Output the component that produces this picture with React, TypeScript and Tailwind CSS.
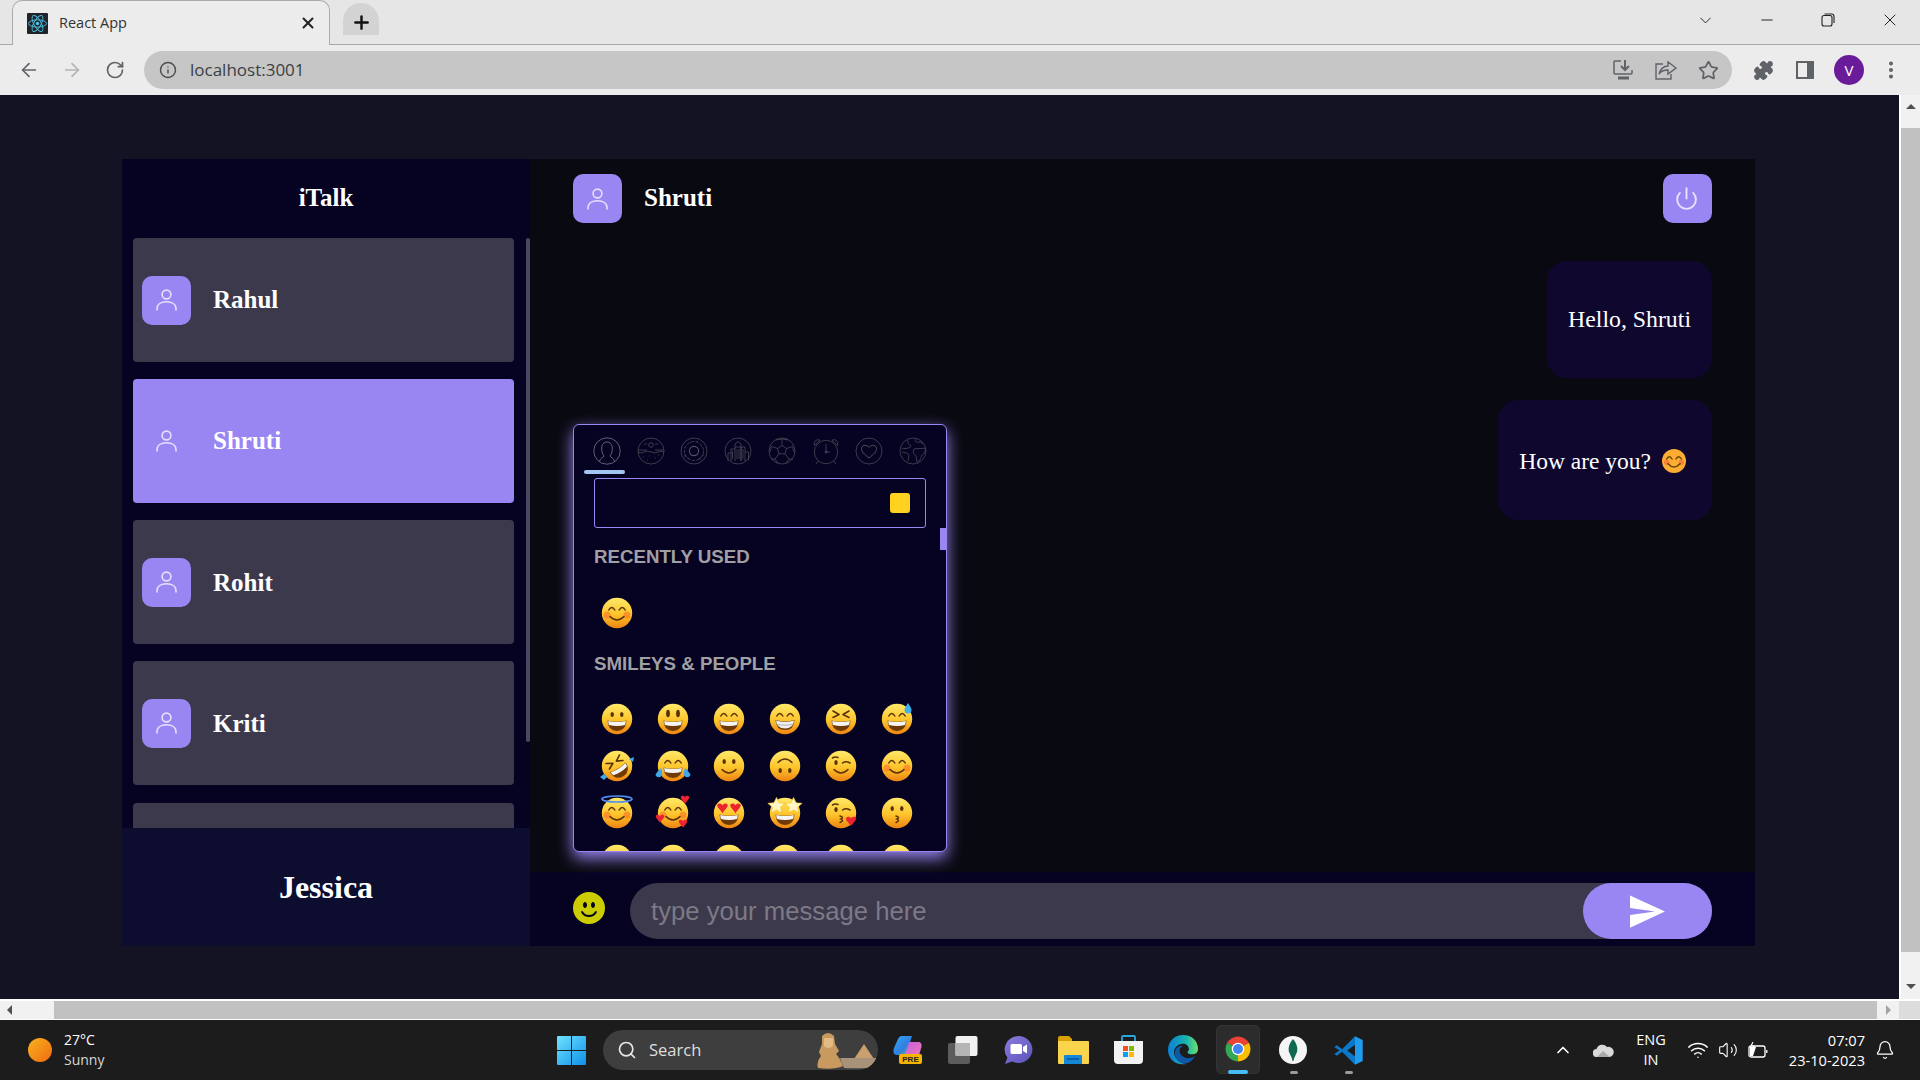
import React from "react";
import { ArrowLeft, ArrowRight, RotateCw, Info, X, Plus, ChevronDown, Minus, Star, Puzzle, EllipsisVertical, Power, ChevronUp, Wifi, Volume2, Bell, Search } from "lucide-react";
import { BsEmojiSmileFill } from "react-icons/bs";
import { IoMdSend } from "react-icons/io";

const Eyes = ({ kind }: { kind: string }) => {
  const c = "#5b3206";
  if (kind === "oval") return <g fill={c}><ellipse cx="11.2" cy="11.5" rx="1.7" ry="2.6" /><ellipse cx="20.8" cy="11.5" rx="1.7" ry="2.6" /></g>;
  if (kind === "big") return <g fill={c}><ellipse cx="11" cy="10.5" rx="1.9" ry="3.8" /><ellipse cx="21" cy="10.5" rx="1.9" ry="3.8" /></g>;
  if (kind === "arc") return <g fill="none" stroke={c} strokeWidth="1.5" strokeLinecap="round"><path d="M7.8 13 Q10.8 7.8 13.8 13" /><path d="M18.2 13 Q21.2 7.8 24.2 13" /></g>;
  if (kind === "x") return <g fill="none" stroke={c} strokeWidth="1.6" strokeLinecap="round" strokeLinejoin="round"><path d="M8 8 L14 11.5 L8 14.5" /><path d="M24 8 L18 11.5 L24 14.5" /></g>;
  if (kind === "wink") return <g fill="none" stroke={c} strokeWidth="1.5" strokeLinecap="round"><ellipse cx="11" cy="12.5" rx="1.7" ry="2.5" fill={c} stroke="none" /><path d="M17.5 13 Q21 10.5 25 13" /><path d="M7.5 8 Q10 6.5 13 7.5" /></g>;
  return null;
};
const Mouth = ({ kind }: { kind: string }) => {
  if (kind === "grin") return <g><path d="M6.5 17.5 Q16 20 25.5 17.5 Q25 28 16 28 Q7 28 6.5 17.5Z" fill="#6e3b08" /><path d="M7.2 18 Q16 20.2 24.8 18 Q24.6 21 24 22 Q16 24 8 22 Q7.4 21 7.2 18Z" fill="#f4f4f4" /></g>;
  if (kind === "teeth") return <g><path d="M6.5 17 Q16 19.5 25.5 17 Q25 27 16 27 Q7 27 6.5 17Z" fill="#6e3b08" /><path d="M7 17.6 Q16 20 25 17.6 Q24.6 25.5 16 25.5 Q7.4 25.5 7 17.6Z" fill="#eee" /><path d="M7.4 21.4 Q16 23.2 24.6 21.4" stroke="#999" strokeWidth=".7" fill="none" /></g>;
  if (kind === "smile") return <path d="M9 19.5 Q16 26.5 23 19.5" fill="none" stroke="#5b3206" strokeWidth="1.5" strokeLinecap="round" />;
  if (kind === "kiss") return <path d="M15 19 Q19.5 20.5 16 22 Q19.5 23.5 15 25.5" fill="none" stroke="#5b3206" strokeWidth="1.5" strokeLinecap="round" />;
  return null;
};
const Heart = ({ x, y, s = 1 }: { x: number; y: number; s?: number }) => (
  <path transform={`translate(${x} ${y}) scale(${s})`} d="M0 3 C-3 -1 -5 -2.5 -5 -4.2 C-5 -6.5 -1.6 -7 0 -4.6 C1.6 -7 5 -6.5 5 -4.2 C5 -2.5 3 -1 0 3Z" fill="#ee2330" />
);
const Star5 = ({ x, y }: { x: number; y: number }) => (
  <path transform={`translate(${x} ${y}) scale(1.35)`} d="M0 -6 L1.9 -2 L6.4 -1.6 L3 1.3 L4 5.6 L0 3.3 L-4 5.6 L-3 1.3 L-6.4 -1.6 L-1.9 -2Z" fill="#fff6c4" stroke="#f2c01a" strokeWidth=".5" />
);

const FACES = [
  ["oval", "grin"], ["big", "grin"], ["arc", "grin"], ["arc", "teeth"], ["x", "grin"], ["arc", "grin", "sweat"],
  ["x", "grin", "rofl"], ["arc", "grin", "joy"], ["oval", "smile"], ["oval", "smile", "upside"], ["wink", "smile"], ["arc", "smile", "blush"],
  ["arc", "smile", "halo"], ["arc", "smile", "hearts"], ["none", "grin", "hearteyes"], ["none", "grin", "stars"], ["wink", "kiss", "kissheart"], ["oval", "kiss"],
  ["oval", "grin"], ["oval", "grin"], ["oval", "grin"], ["oval", "grin"], ["oval", "grin"], ["oval", "grin"],
];

function Emoji({ id, face }: { id: string; face: string[] }) {
  const [eyes, mouth, extra] = face;
  const rot = extra === "rofl" ? "rotate(-32 16 16)" : extra === "upside" ? "rotate(180 16 16)" : undefined;
  return (
    <svg width="38" height="38" viewBox="-1 -1 38 38">
      <defs>
        <linearGradient id={id} x1="0" y1="0" x2="0" y2="1">
          <stop offset="0" stopColor="#ffe968" />
          <stop offset=".55" stopColor="#fdc42c" />
          <stop offset="1" stopColor="#ee8412" />
        </linearGradient>
      </defs>
      <g transform="translate(2 2)">
        <circle cx="16" cy="16" r="15.2" fill={`url(#${id})`} />
        {(extra === "blush" || extra === "halo" || extra === "hearts") && <g fill="#fb6a2b" opacity=".55"><circle cx="6" cy="18" r="3.5" /><circle cx="26" cy="18" r="3.5" /></g>}
        <g transform={rot}>
          <Eyes kind={eyes} />
          <Mouth kind={mouth} />
        </g>
        {extra === "sweat" && <path d="M27 0 C29 3.5 30.5 5 30.5 7 A3.5 3.5 0 0 1 23.5 7 C23.5 5 25 3.5 27 0Z" fill="#3db2ee" />}
        {extra === "joy" && <g fill="#3fa9ee"><path d="M4 18 C0 22 -1.5 24 -1.5 25 A3.5 3.5 0 0 0 5 25 C5.5 23 5 20 4 18Z" /><path d="M28 18 C32 22 33.5 24 33.5 25 A3.5 3.5 0 0 1 27 25 C26.5 23 27 20 28 18Z" /></g>}
        {extra === "rofl" && <g fill="#3fa9ee"><path d="M28 9 L33 7 L32 12 Z" /><path d="M3 24 L-1 27 L3 30 L6 27Z" /></g>}
        {extra === "halo" && <ellipse cx="16" cy="2" rx="15" ry="3" fill="none" stroke="#4f8df2" strokeWidth="1.7" />}
        {extra === "hearts" && <g><Heart x={28} y={4} s={.85} /><Heart x={3} y={23} s={.85} /><Heart x={26} y={28} s={.85} /></g>}
        {extra === "hearteyes" && <g><Heart x={9.5} y={13} s={1.05} /><Heart x={22.5} y={13} s={1.05} /></g>}
        {extra === "stars" && <g><Star5 x={7.5} y={8.5} /><Star5 x={24.5} y={8.5} /></g>}
        {extra === "kissheart" && <Heart x={26} y={26} s={1} />}
      </g>
    </svg>
  );
}

const tabStroke = { fill: "none", stroke: "currentColor", strokeWidth: 0.7 };
const CatIcons = [
  <g {...tabStroke}><circle cx="14" cy="14" r="13.2" /><path d="M6.5 24.5 C7 21 10.5 20.5 11 19 C9.5 17 8.5 14.5 8.7 11 C9 7 11 5 14 5 C17 5 19 7 19.3 11 C19.5 14.5 18.5 17 17 19 C17.5 20.5 21 21 21.5 24.5" /></g>,
  <g {...tabStroke}><circle cx="14" cy="14" r="13" /><circle cx="14" cy="8" r="2.3" /><path d="M1.5 13 H10 M18 13 H26.5 M7 7 H10 M18 7 H21 M1 15 Q4 17 7 15 T14 15 T21 15 T27 15" /><path d="M6 20 h1 M12 19 h1 M18 21 h1 M10 23 h1 M21 18 h1" /></g>,
  <g {...tabStroke}><circle cx="14" cy="14" r="13" /><circle cx="14" cy="14" r="4.6" strokeWidth="1.1" /><circle cx="14" cy="14" r="9.5" strokeDasharray="3 1.6" /><path d="M5 17 v3 M8 20 v2 M20 20 v3 M23 17 v2 M10 6 h1 M17 5 h1 M21 9 h1" /></g>,
  <g {...tabStroke}><circle cx="14" cy="14" r="13" /><path d="M11 24 V7 L14 4.5 L17 7 V24 M11 10 H17 M13 12 V22 M15 12 V22 M7 24 V12 H11 M17 24 V10 H21 V24 M4 24 V16 H7 M21 15 H24.5 V23 M8.5 14 V22 M19 12 V22" /></g>,
  <g {...tabStroke}><circle cx="14" cy="14" r="13" /><path d="M9.5 11.5 L14 8.5 L18.5 11.5 L17 16.8 H11 Z M14 8.5 V2 M9.5 11.5 L3.5 9.5 M18.5 11.5 L24.5 9.5 M11 16.8 L7 22 M17 16.8 L21 22 M7 22 L10 26 M21 22 L18 26 M3.5 9.5 L2 15 M24.5 9.5 L26 15 M7 22 H3 M21 22 H25 M14 2 L8 3 M14 2 L20 3" /></g>,
  <g {...tabStroke}><circle cx="14" cy="15" r="11.7" /><path d="M14 7 V15 H18" /><circle cx="14" cy="15" r="1" /><path d="M2.5 8.5 A4 4 0 0 1 8 3.2 Z M25.5 8.5 A4 4 0 0 0 20 3.2 Z M6 24 L4 27 M22 24 L24 27" /></g>,
  <g {...tabStroke}><circle cx="14" cy="14" r="13" /><path strokeWidth="1" d="M14 21 C9 17 6.5 14.5 6.5 11.5 C6.5 8 11.5 7 14 10.5 C16.5 7 21.5 8 21.5 11.5 C21.5 14.5 19 17 14 21Z" /></g>,
  <g {...tabStroke}><circle cx="14" cy="14" r="13" /><path d="M8 3 C10 5 8 7 11 8 C13 9 11 11 9 11 C7 12 5 11 3 12 M17 2 C15 4 17 6 20 5 C22 5 23 6 24 7 M15 12 C18 11 22 12 26 11 C27 14 25 17 23 18 C22 21 20 25 18 25 C17 22 18 19 16 18 C14 17 14 14 15 12Z M3 15 C5 16 7 15 9 17 C11 19 9 21 9 24" /></g>,
];

const ReactLogo = () => (
  <svg width="21" height="21" viewBox="0 0 21 21"><rect width="21" height="21" rx="1" fill="#20232a" /><g fill="none" stroke="#4fbfdf" strokeWidth=".9"><ellipse cx="10.5" cy="10.5" rx="9" ry="3.6" /><ellipse cx="10.5" cy="10.5" rx="9" ry="3.6" transform="rotate(60 10.5 10.5)" /><ellipse cx="10.5" cy="10.5" rx="9" ry="3.6" transform="rotate(120 10.5 10.5)" /></g><circle cx="10.5" cy="10.5" r="1.8" fill="#4fbfdf" /></svg>
);

const Copilot = () => (
  <svg width="30" height="30" viewBox="0 0 30 30">
    <defs>
      <linearGradient id="cpA" x1="0" y1="0" x2="1" y2="1"><stop offset="0" stopColor="#38a6f2" /><stop offset=".6" stopColor="#2f7fe0" /><stop offset="1" stopColor="#6bd26e" /></linearGradient>
      <linearGradient id="cpB" x1="0" y1="0" x2="1" y2="1"><stop offset="0" stopColor="#c35fe0" /><stop offset="1" stopColor="#f27ab0" /></linearGradient>
    </defs>
    <path d="M9 1 H19 L13 20 H4 C0 20 0 16 1 13 L5 4 C6 2 7 1 9 1Z" fill="url(#cpA)" />
    <path d="M16 7 H25 C28 7 29 9 28.5 12 L26 20 C25 22 24 23 22 23 H11 Z" fill="url(#cpB)" />
    <rect x="6" y="19" width="23" height="10" rx="2" fill="#f4b400" />
    <text x="17.5" y="27" fontSize="8" fontWeight="700" fontFamily="Liberation Sans" fill="#222" textAnchor="middle">PRE</text>
  </svg>
);
const TaskView = () => (
  <svg width="32" height="30" viewBox="0 0 32 30">
    <rect x="1" y="8" width="22" height="21" rx="2" fill="#5c5c5c" />
    <rect x="8.5" y="1" width="22" height="20" rx="2" fill="#f1f1f1" />
    <rect x="8.5" y="8" width="14.5" height="13" fill="#b5b5b5" />
  </svg>
);
const Meet = () => (
  <svg width="30" height="30" viewBox="0 0 30 30">
    <defs><linearGradient id="mt" x1="0" y1="0" x2="1" y2="1"><stop offset="0" stopColor="#8a7bde" /><stop offset="1" stopColor="#5a52b8" /></linearGradient></defs>
    <path d="M15 1 A14 13.5 0 1 1 9 26.5 L2 29 L4.5 22.5 A14 13.5 0 0 1 15 1Z" fill="url(#mt)" />
    <rect x="7.5" y="9" width="11.5" height="10" rx="1.5" fill="#fff" />
    <path d="M20 12 L24 9.5 V18.5 L20 16Z" fill="#fff" />
  </svg>
);
const Explorer = () => (
  <svg width="31" height="28" viewBox="0 0 31 28">
    <path d="M0 2 Q0 0 2 0 H11 L14 3 V8 H0Z" fill="#d9a106" />
    <path d="M0 5 H30 Q31 5 31 6 V27 Q31 28 30 28 H1 Q0 28 0 27Z" fill="#fbd44e" />
    <path d="M6 20 Q6 19 7 19 H23 Q24 19 24 20 V28 H6Z" fill="#1686d6" />
    <rect x="9" y="22" width="12" height="2" fill="#0b5fa8" />
  </svg>
);
const Store = () => (
  <svg width="29" height="30" viewBox="0 0 29 30">
    <path d="M8 6 V2 Q8 1 9 1 H20 Q21 1 21 2 V6" fill="none" stroke="#2aa6e0" strokeWidth="1.8" />
    <path d="M0 6 H29 V25 Q29 29 25 29 H4 Q0 29 0 25Z" fill="#f2f2f2" />
    <rect x="9" y="11" width="5" height="5" fill="#f25022" /><rect x="15" y="11" width="5" height="5" fill="#7fba00" />
    <rect x="9" y="17" width="5" height="5" fill="#00a4ef" /><rect x="15" y="17" width="5" height="5" fill="#ffb900" />
  </svg>
);
const Edge = () => (
  <svg width="30" height="30" viewBox="0 0 30 30">
    <defs><linearGradient id="ed" x1="0" y1="0" x2="1" y2="0"><stop offset="0" stopColor="#0b7fd6" /><stop offset=".6" stopColor="#18b3b0" /><stop offset="1" stopColor="#6fe06c" /></linearGradient></defs>
    <path d="M15 0 C24 0 30 6 30 14 C30 19 25 20 21 19 C19 18 19 16 21 15 C21 11 18 8 13 9 C9 10 6 13 6 17 C6 24 13 29 18 29 C8 31 0 24 0 15 C0 6 7 0 15 0Z" fill="url(#ed)" />
    <path d="M7 16 C8 12 12 10 15 11 C12 12 11 15 12 18 C14 23 21 25 27 21 C24 27 18 30 13 28 C9 26 6 21 7 16Z" fill="#0d59a8" />
  </svg>
);
const Chrome = () => (
  <svg width="30" height="30" viewBox="0 0 48 48">
    <path d="M24 24 L6.7 14 A20 20 0 0 1 41.3 14Z" fill="#ea4335" />
    <path d="M24 24 L41.3 14 A20 20 0 0 1 24 44Z" fill="#fbbc04" />
    <path d="M24 24 L24 44 A20 20 0 0 1 6.7 14Z" fill="#34a853" />
    <circle cx="24" cy="24" r="10" fill="#fff" /><circle cx="24" cy="24" r="8" fill="#4285f4" />
  </svg>
);
const Compass = () => (
  <svg width="30" height="30" viewBox="0 0 30 30">
    <circle cx="15" cy="15" r="14" fill="#f5f5f5" />
    <path d="M15 4 C19 9 20 13 19 17 C18 20 16 22 15.5 26 H14.5 C14 22 12 20 11 17 C10 13 11 9 15 4Z" fill="#0f6a4f" />
  </svg>
);
const VSCode = () => (
  <svg width="31" height="31" viewBox="0 0 24 24">
    <path fillRule="evenodd" d="M17 1 L7 11 L3 8 L1 9.2 V14.8 L3 16 L7 13 L17 23 Z M17 7.5 L11 12 L17 16.5Z M1 9.2 L5 12 L1 14.8Z" fill="#0b78c9" />
    <path d="M17 1 L23 3.8 V20.2 L17 23Z" fill="#1f9cf0" />
  </svg>
);
const Sphinx = () => (
  <svg width="64" height="38" viewBox="0 0 64 38">
    <path d="M40 27 L50 12 L60 27Z" fill="#c9a06d" />
    <path d="M26 26 H62 V35 Q50 37 30 36Z" fill="#a8937a" />
    <path d="M8 4 Q14 -2 20 4 L21 12 L25 19 L22 22 Q26 26 29 34 Q20 38 4 36 Q2 30 7 24 L5 20 L8 12Z" fill="#c89a60" />
    <path d="M10 6 H19 V14 Q14 18 10 14Z" fill="#e2bb85" />
  </svg>
);

const taskIcons = [<Copilot />, <TaskView />, <Meet />, <Explorer />, <Store />, <Edge />];

function Avatar({ plain }: { plain?: boolean }) {
  return (
    <div className={`w-[49px] h-[49px] rounded-[10px] flex items-center justify-center shrink-0 ${plain ? "" : "bg-[#9a86f3]"}`}>
      <svg width="21" height="22" viewBox="0 0 21 22" fill="none" stroke="#e6e0fd" strokeWidth="1.6" strokeLinecap="round">
        <circle cx="10.5" cy="5.5" r="4.4" />
        <path d="M1 21 V20 C1 15.5 5 12.8 10.5 12.8 C16 12.8 20 15.5 20 20 V21" />
      </svg>
    </div>
  );
}

function Contact({ name, active }: { name: string; active?: boolean }) {
  return (
    <div className={`h-[124px] shrink-0 rounded-[4px] flex items-center gap-[22px] pl-[9px] ${active ? "bg-[#9a86f3]" : "bg-[#3c394c]"}`}>
      <Avatar plain={active} />
      <span className="text-[25px] font-bold text-white">{name}</span>
    </div>
  );
}

export default function App() {
  return (
    <div className="w-[1920px] h-[1080px] overflow-hidden flex flex-col bg-[#131324] font-['Liberation_Serif',serif]">
      {/* tab strip */}
      <div className="h-[45px] shrink-0 bg-[#e6e6e6] border-b border-[#a8a8a8] flex items-start pl-[12px] font-['Open_Sans',sans-serif]">
        <div className="w-[318px] h-[45px] rounded-t-[10px] border border-b-0 border-[#ababab] bg-[#ececec] flex items-center pl-[14px] pr-[12px] gap-[11px]">
          <ReactLogo />
          <span className="text-[14.5px] text-[#333]">React App</span>
          <X size={18} strokeWidth={2.6} className="ml-auto text-[#222]" />
        </div>
        <div className="ml-[13px] mt-[3px] w-[36px] h-[32px] rounded-t-[18px] bg-[#d3d3d3] flex items-start justify-center pt-[9px]">
          <Plus size={21} strokeWidth={2.8} className="text-[#111]" />
        </div>
        <div className="ml-auto flex items-center h-[40px] text-[#222]">
          <ChevronDown size={19} strokeWidth={1.2} />
          <div className="w-[60px] ml-[22px] flex justify-center"><Minus size={18} strokeWidth={1.3} /></div>
          <div className="w-[62px] flex justify-center">
            <svg width="14" height="14" viewBox="0 0 14 14" fill="none" stroke="#222" strokeWidth="1.1"><rect x="1" y="2.5" width="10" height="10.5" rx="2" /><path d="M3.5 1 H10.5 Q13 1 13 3.5 V10" /></svg>
          </div>
          <div className="w-[61px] flex justify-center"><X size={20} strokeWidth={1.2} /></div>
        </div>
      </div>
      {/* toolbar */}
      <div className="h-[50px] shrink-0 bg-[#ececec] flex items-center font-['Open_Sans',sans-serif]">
        <div className="w-[144px] flex items-center pl-[18px] gap-[21px] text-[#5f6368]">
          <ArrowLeft size={22} strokeWidth={1.8} />
          <ArrowRight size={22} strokeWidth={1.8} className="text-[#b3b3b3]" />
          <RotateCw size={20} strokeWidth={2} className="ml-[1px]" />
        </div>
        <div className="w-[1588px] h-[38px] rounded-full bg-[#c6c6c6] flex items-center pl-[15px] pr-[13px] text-[#4c4c4c]">
          <Info size={18} strokeWidth={1.9} />
          <span className="ml-[13px] text-[17px] text-[#3c4043]">localhost:3001</span>
          <svg className="ml-auto" width="22" height="22" viewBox="0 0 22 22" fill="none" stroke="#5f6368" strokeWidth="1.5"><path d="M9 2 H3 Q2 2 2 3 V14 Q2 15 3 15 H19 Q20 15 20 14 V11" /><path d="M13 1 V10 M9 7 L13 11 L17 7" strokeWidth="2" /><path d="M6 19 H17" strokeWidth="3" /></svg>
          <svg className="ml-[21px]" width="22" height="20" viewBox="0 0 22 20" fill="none" stroke="#5f6368" strokeWidth="1.4"><path d="M8 4 H1 V19 H16 V14" /><path d="M4 14 C5 9 9 6 13 6 V2 L21 8 L13 14 V10 C9 10 6 11 4 14Z" /></svg>
          <Star size={21} strokeWidth={2} className="ml-[21px] text-[#5f6368]" />
        </div>
        <div className="flex items-center text-[#5f6368]">
          <Puzzle size={21} fill="#5f6368" strokeWidth={1.5} className="ml-[21px]" />
          <svg className="ml-[21px]" width="20" height="20" viewBox="0 0 20 20"><path d="M1 1 H19 V19 H1Z M3 3 V17 H12 V3Z" fill="#5f6368" fillRule="evenodd" /></svg>
          <div className="ml-[19px] w-[30px] h-[30px] rounded-full bg-[#6a1b9a] text-white text-[15px] flex items-center justify-center">V</div>
          <EllipsisVertical size={22} strokeWidth={2.4} className="ml-[16px]" />
        </div>
      </div>
      {/* middle */}
      <div className="h-[904px] shrink-0 flex">
        <div className="w-[1899px] shrink-0 pl-[122px] pt-[64px]">
          <div className="w-[1633px] h-[787px] flex">
            {/* sidebar */}
            <div className="w-[408px] shrink-0 flex flex-col bg-[#060222] overflow-hidden">
              <div className="h-[79px] shrink-0 flex items-center justify-center text-white font-bold text-[25px] pb-[2px]">iTalk</div>
              <div className="relative h-[590px] shrink-0 overflow-hidden flex flex-col gap-[17.15px] pl-[11px] pr-[16px]">
                <Contact name="Rahul" />
                <Contact name="Shruti" active />
                <Contact name="Rohit" />
                <Contact name="Kriti" />
                <Contact name="" />
                <div className="absolute right-0 top-0 w-[4px] h-[504px] rounded-full bg-[#4a4760]" />
              </div>
              <div className="h-[118px] shrink-0 bg-[#0d0d30] flex items-center justify-center text-white font-bold text-[32px]">Jessica</div>
            </div>
            {/* chat */}
            <div className="relative flex-1 flex flex-col bg-[#090911]">
              <div className="h-[102px] shrink-0 flex items-start justify-between pt-[15px] px-[43px]">
                <div className="flex items-center gap-[22px]">
                  <Avatar />
                  <span className="text-white font-bold text-[25px] pb-[2px]">Shruti</span>
                </div>
                <div className="w-[49px] h-[49px] rounded-[10px] bg-[#9a86f3] flex items-center justify-center">
                  <Power size={25} strokeWidth={1.8} className="text-[#e9e4fd] -translate-x-[1px]" />
                </div>
              </div>
              <div className="flex-1 flex flex-col items-end gap-[22px] pr-[43px]">
                <div className="h-[117px] rounded-[20px] bg-[#10072f] text-white text-[23.8px] px-[21px] flex items-center">Hello, Shruti</div>
                <div className="h-[120px] rounded-[20px] bg-[#10072f] text-white text-[23.5px] pl-[21px] pr-[26px] flex items-center">
                  <span className="pt-[4px]">How are you?</span>
                  <svg className="ml-[11px] pt-[1px]" width="24" height="25" viewBox="0 0 36 36">
                    <circle cx="18" cy="18" r="18" fill="#ffac33" />
                    <circle cx="7" cy="20" r="4" fill="#f4743b" opacity=".8" /><circle cx="29" cy="20" r="4" fill="#f4743b" opacity=".8" />
                    <g fill="none" stroke="#664500" strokeWidth="2.2" strokeLinecap="round"><path d="M7 15 Q11 8 15 15" /><path d="M21 15 Q25 8 29 15" /><path d="M9 22 Q18 32 27 22" /></g>
                  </svg>
                </div>
              </div>
              <div className="h-[74px] shrink-0 bg-[#060222] flex items-center pl-[43px] pr-[43px] gap-[25px]">
                <BsEmojiSmileFill size={32} className="text-[#cccc02] shrink-0 mb-[2px]" />
                <div className="flex-1 h-[56px] mt-[4px] rounded-full bg-[#3c394c] flex items-center">
                  <input placeholder="type your message here" className="flex-1 min-w-0 bg-transparent pl-[21px] text-[25.7px] outline-none font-['Liberation_Sans',sans-serif] placeholder:text-[#7c7a86]" />
                  <div className="w-[129px] h-[56px] rounded-full bg-[#9a86f3] flex items-center justify-center shrink-0">
                    <IoMdSend size={43} className="text-white" />
                  </div>
                </div>
              </div>
              {/* emoji picker */}
              <div className="absolute left-[43px] top-[265px] w-[374px] h-[428px] rounded-[6px] border border-[#9a86f3] bg-[#060222] shadow-[0_6px_16px_#9a86f3] overflow-hidden font-['Liberation_Sans',sans-serif]">
                <div className="relative h-[53px] flex items-center pl-[11px] pb-[1px]">
                  {CatIcons.map((c, i) => (
                    <div key={i} className={`w-[43.75px] flex justify-center ${i === 0 ? "text-[#8b8a90]" : "text-[#55545f]"}`}>
                      <svg width="28" height="28" viewBox="0 0 28 28">{c}</svg>
                    </div>
                  ))}
                  <div className="absolute left-[10px] top-[45px] w-[41px] h-[4px] rounded-full bg-[#a3c5f2]" />
                </div>
                <div className="mx-[20px] h-[50px] rounded-[3px] border border-[#9a86f3] flex items-center justify-end pr-[15px]">
                  <div className="w-[20px] h-[20px] rounded-[3px] bg-[#ffd21f]" />
                </div>
                <div className="absolute right-0 top-[103px] w-[6px] h-[22px] bg-[#9a86f3]" />
                <div className="mt-[17px] h-[24px] pl-[20px] flex items-center text-[18.7px] font-bold text-[#a0a0a4]">RECENTLY USED</div>
                <div className="mt-[20px] pl-[15px] grid grid-cols-[repeat(6,56px)] auto-rows-[47px]">
                  <div className="flex items-center justify-center"><Emoji id="em-r" face={["arc", "smile", "blush"]} /></div>
                </div>
                <div className="mt-[16px] h-[24px] pl-[20px] flex items-center text-[18.7px] font-bold text-[#a0a0a4]">SMILEYS &amp; PEOPLE</div>
                <div className="mt-[19px] pl-[15px] grid grid-cols-[repeat(6,56px)] auto-rows-[47px]">
                  {FACES.map((f, i) => (
                    <div key={i} className="flex items-center justify-center"><Emoji id={`em-${i}`} face={f} /></div>
                  ))}
                </div>
              </div>
            </div>
          </div>
        </div>
        {/* vertical scrollbar */}
        <div className="w-[21px] shrink-0 border-l-2 border-white bg-[#f1f1f1] flex flex-col">
          <div className="h-[33px] flex items-start justify-center pt-[9px]"><div className="w-0 h-0 border-x-[5px] border-x-transparent border-b-[5px] border-b-[#505050]" /></div>
          <div className="h-[824px] bg-[#c1c1c1]" />
          <div className="flex-1 flex items-end justify-center pb-[10px]"><div className="w-0 h-0 border-x-[5px] border-x-transparent border-t-[5px] border-t-[#505050]" /></div>
        </div>
      </div>
      {/* horizontal scrollbar */}
      <div className="h-[21px] shrink-0 border-t-2 border-b border-white flex bg-[#f1f1f1]">
        <div className="w-[54px] flex items-center pl-[7px]"><div className="w-0 h-0 border-y-[5px] border-y-transparent border-r-[5px] border-r-[#505050]" /></div>
        <div className="w-[1823px] bg-[#c1c1c1]" />
        <div className="w-[22px] flex items-center justify-center"><div className="w-0 h-0 border-y-[5px] border-y-transparent border-l-[5px] border-l-[#a3a3a3]" /></div>
        <div className="flex-1 bg-[#dcdcdc]" />
      </div>
      {/* taskbar */}
      <div className="h-[60px] shrink-0 bg-[#1c1c1c] flex items-center text-white font-['Open_Sans',sans-serif]">
        <div className="w-[557px] shrink-0 flex items-center pl-[28px] gap-[12px]">
          <div className="w-[24px] h-[24px] rounded-full bg-gradient-to-br from-[#f6b21e] to-[#f0680f]" />
          <div className="flex flex-col text-[14px] leading-[20px]">
            <span>27°C</span>
            <span className="text-[#d6d6d6]">Sunny</span>
          </div>
        </div>
        <svg width="29" height="29" viewBox="0 0 29 29" className="shrink-0">
          <defs><linearGradient id="win" x1="0" y1="0" x2="1" y2="1"><stop offset="0" stopColor="#6fe3ff" /><stop offset="1" stopColor="#0f8fe8" /></linearGradient></defs>
          <path d="M0 1 Q0 0 1 0 H14 V14 H0Z M15 0 H28 Q29 0 29 1 V14 H15Z M0 15 H14 V29 H1 Q0 29 0 28Z M15 15 H29 V28 Q29 29 28 29 H15Z" fill="url(#win)" />
        </svg>
        <div className="ml-[17px] w-[275px] h-[40px] shrink-0 rounded-full bg-[#3e3e3e] flex items-center pl-[14px] overflow-hidden">
          <Search size={20} strokeWidth={2} className="text-[#e6e6e6]" />
          <span className="ml-[12px] text-[16.5px] text-[#dedede]">Search</span>
          <div className="ml-auto mt-[2px]"><Sphinx /></div>
        </div>
        <div className="ml-[2.5px] flex items-center">
          {taskIcons.map((ic, i) => (
            <div key={i} className="w-[55px] flex justify-center">{ic}</div>
          ))}
          <div className="relative w-[55px] h-[60px] flex items-center justify-center">
            <div className="absolute left-[32px] top-[5px] w-[17px] h-[49px] rounded-[5px] bg-[#262626]" />
            <div className="absolute left-[5px] top-[5px] w-[44px] h-[49px] rounded-[5px] bg-[#2c2c2c] border border-[#333]" />
            <div className="relative -translate-y-[1px]"><Chrome /></div>
            <div className="absolute left-[17px] top-[50px] w-[20px] h-[4px] rounded-full bg-[#47bdf5]" />
          </div>
          <div className="relative w-[55px] h-[60px] flex items-center justify-center">
            <Compass />
            <div className="absolute left-[24px] top-[51px] w-[8px] h-[3px] rounded-full bg-[#9a9a9a]" />
          </div>
          <div className="relative w-[55px] h-[60px] flex items-center justify-center">
            <VSCode />
            <div className="absolute left-[24px] top-[51px] w-[8px] h-[3px] rounded-full bg-[#9a9a9a]" />
          </div>
        </div>
        <div className="ml-[172.5px] w-[30px] flex justify-center"><ChevronUp size={20} strokeWidth={2} /></div>
        <div className="w-[50px] flex justify-center">
          <svg width="21" height="14" viewBox="0 0 21 14"><path d="M4 14 A4 4 0 0 1 3.5 6 A6 6 0 0 1 14 4 A4.5 4.5 0 0 1 17 14Z" fill="#d9d9d9" /><path d="M4 14 L10 8 L17 14Z" fill="#a9a9a9" /></svg>
        </div>
        <div className="w-[46px] flex flex-col items-center text-[14.5px] leading-[20px]"><span>ENG</span><span>IN</span></div>
        <div className="ml-[4px] w-[40px] flex justify-center"><Wifi size={22} strokeWidth={1.7} /></div>
        <div className="w-[20px] flex justify-center"><Volume2 size={22} strokeWidth={1.3} /></div>
        <div className="w-[40px] flex justify-center">
          <svg width="20" height="17" viewBox="0 0 20 17" fill="none" stroke="#fff" strokeWidth="1.3"><rect x="1" y="4" width="16" height="11" rx="2" /><path d="M18.8 8 V11" /><path d="M2 5 H8 L5 14 H2Z" fill="#fff" stroke="none" /><path d="M5 0 L3 4 H6 L4 8" strokeWidth="1.1" /></svg>
        </div>
        <div className="w-[87px] flex flex-col items-end text-[14.6px] leading-[20px]"><span>07:07</span><span>23-10-2023</span></div>
        <div className="ml-[6px] w-[28px] flex justify-center"><Bell size={20} strokeWidth={1.5} /></div>
      </div>
    </div>
  );
}
